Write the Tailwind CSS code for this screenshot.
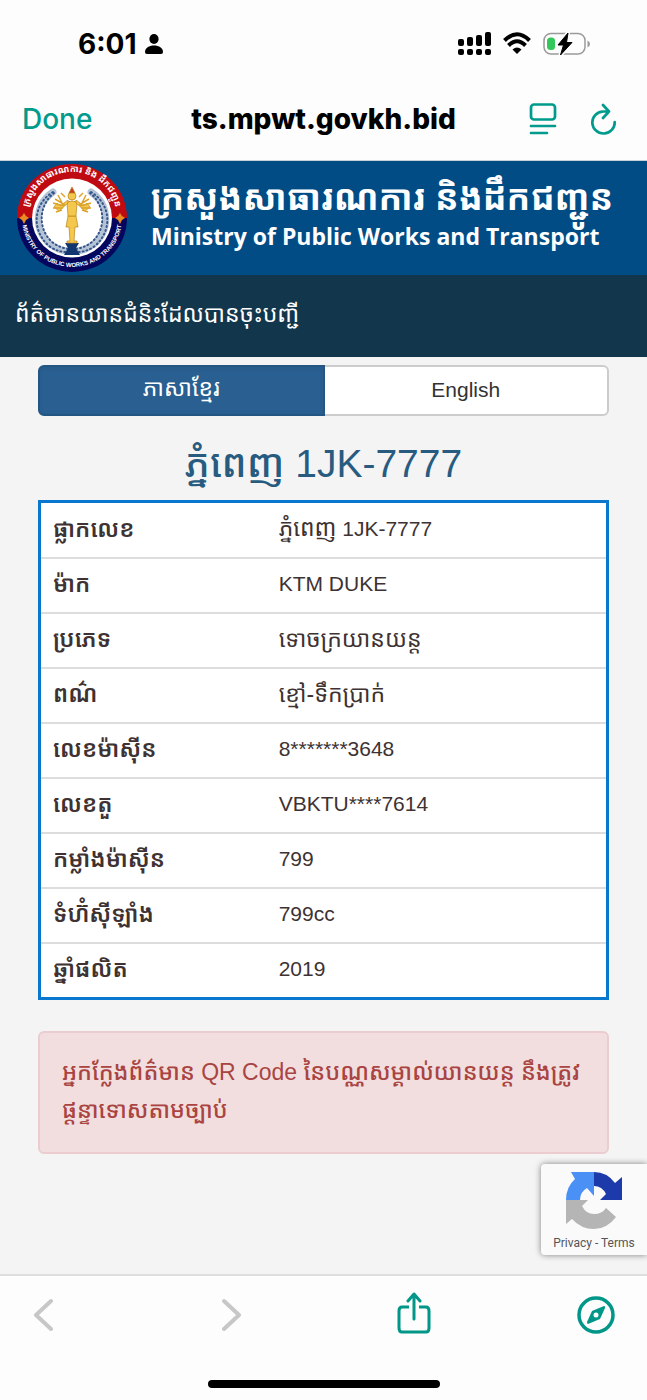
<!DOCTYPE html>
<html lang="km">
<head>
    <meta charset="UTF-8">
    <meta name="viewport" content="width=device-width, initial-scale=1.0">
    <title>Ministry of Public Works and Transport</title>
    <script src="https://cdn.jsdelivr.net/npm/@tailwindcss/browser@4"></script>
</head>
<body class="bg-[#f4f4f4] font-['Liberation_Sans','Noto_Sans_Khmer',sans-serif] text-[#333333]">
    <div class="flex min-h-screen flex-col">
        <!-- Status bar -->
        <div class="flex h-20 items-center justify-between bg-[#fdfdfd] pt-2 pr-14 pl-[78px] text-black">
            <div class="flex items-center gap-2">
                <span class="font-['Inter',sans-serif] text-[28px] font-bold">6:01</span>
                <svg class="h-5 w-[18px]" viewBox="0 0 18 20" fill="currentColor">
                    <ellipse cx="9" cy="5" rx="4.6" ry="5" />
                    <path d="M0 18C0 14 4 11.5 9 11.5S18 14 18 18Q18 20 16 20H2Q0 20 0 18Z" />
                </svg>
            </div>
            <div class="flex items-center gap-3">
                <svg class="h-6 w-[33px]" viewBox="0 0 33 24" fill="currentColor">
                    <rect x="0" y="7" width="6" height="7" rx="2" />
                    <rect x="9" y="5" width="6" height="9" rx="2" />
                    <rect x="18" y="3" width="6" height="11" rx="2" />
                    <rect x="27" y="0" width="6" height="14" rx="2" />
                    <rect x="0" y="17" width="6" height="6" rx="2" />
                    <rect x="9" y="17" width="6" height="6" rx="2" />
                    <rect x="18" y="17" width="6" height="6" rx="2" />
                    <rect x="27" y="17" width="6" height="6" rx="2" />
                </svg>
                <svg class="h-6 w-7" viewBox="0 0 28 24">
                    <path d="M1.5 8.5Q14-4 26.5 8.5M5.5 13.5Q14 5 22.5 13.5" fill="none" stroke="currentColor" stroke-width="4" />
                    <path d="M9.5 17.5Q14 13.5 18.5 17.5L14 22Z" fill="currentColor" />
                </svg>
                <svg class="h-6 w-12" viewBox="0 0 48 24">
                    <rect x="1" y="1.5" width="41" height="20.5" rx="7" fill="none" stroke="#9b9b9b" stroke-width="1.5" />
                    <path d="M44.5 8.5Q47 9.5 47 12T44.5 15.5Z" fill="#9b9b9b" />
                    <rect x="4" y="5.5" width="8" height="12.5" rx="3.5" fill="#34c759" />
                    <path d="M25 1L15 13H20.5L17.5 23L29 10.5H23.5Z" fill="black" stroke="#fdfdfd" stroke-width="4" stroke-linejoin="round" />
                    <path d="M25 1L15 13H20.5L17.5 23L29 10.5H23.5Z" fill="black" stroke="black" stroke-width="1" stroke-linejoin="round" />
                </svg>
            </div>
        </div>

        <!-- Browser bar -->
        <div class="grid h-[81px] grid-cols-[1fr_auto_1fr] items-center border-b border-[#c5d0d8] bg-[#fdfdfd] px-[22px] pb-0.5 font-['Inter',sans-serif] text-[28px]">
            <button class="justify-self-start font-medium text-[#009b8c]">Done</button>
            <span class="font-extrabold text-black">ts.mpwt.govkh.bid</span>
            <div class="flex gap-8 justify-self-end pr-2 text-[#009b8c]">
                <button aria-label="Reader">
                    <svg class="h-8 w-7" viewBox="0 0 28 32" fill="none" stroke="currentColor" stroke-width="2.7" stroke-linecap="round">
                        <rect x="2" y="1.5" width="24" height="15" rx="3" />
                        <path d="M2 23H26M2 30H18" />
                    </svg>
                </button>
                <button aria-label="Reload">
                    <svg class="h-8 w-7" viewBox="0 0 28 32" fill="none" stroke="currentColor" stroke-width="2.7" stroke-linecap="round" stroke-linejoin="round">
                        <path d="M20 8.5H14A11.2 11 0 1 0 25.700 19M14 2L20 8.5L14 15" />
                    </svg>
                </button>
            </div>
        </div>

        <!-- Ministry header -->
        <header class="flex h-[114px] items-center gap-6 bg-[#024c86] px-[17px] text-white">
            <svg class="h-[108px] w-[110px] shrink-0" viewBox="0 0 110 108">
                <defs>
                    <path id="arcTop" d="M11 50A44 42 0 0 1 99 50" />
                    <path id="arcBottom" d="M5 54A50 49 0 0 0 105 54" />
                </defs>
                <path d="M0 54A55 54 0 0 1 110 54Z" fill="#c00a12" />
                <path d="M0 54A55 54 0 0 0 110 54Z" fill="#05075e" />
                <ellipse cx="55" cy="54" rx="40" ry="39.5" fill="white" />
                <!-- Wreath -->
                <g fill="none" stroke-linecap="round">
                    <path d="M36 28C18 40 16 65 33 80Q42 87 52 87M74 28C92 40 94 65 77 80Q68 87 58 87" stroke="#b4c3d6" stroke-width="7" />
                    <path d="M36 28C16 40 14 66 32 82Q42 89 52 88M74 28C94 40 96 66 78 82Q68 89 58 88" stroke="#35558a" stroke-width="2" stroke-dasharray="1 3" />
                    <path d="M37 29C22 41 20 64 35 78Q43 84 52 85M73 29C88 41 90 64 75 78Q67 84 58 85" stroke="#35558a" stroke-width="2" stroke-dasharray="1 3" />
                </g>
                <path d="M48 79H62L59 84L63 91H47L51 84Z" fill="#12366f" />
                <!-- Figure -->
                <g fill="#f4c84c" stroke="#b98318" stroke-width="0.7">
                    <path d="M51 52H59L61 63H58L57 77H60V79H50V77H53L52 63H49Z" />
                    <path d="M50 38Q55 36 60 38L59 52H51Z" />
                    <path d="M51 39L42 47L37 43L40 39L43 42L51 36ZM59 39L68 47L73 43L70 39L67 42L59 36Z" />
                    <circle cx="55" cy="32" r="4" />
                    <path d="M52 29L55 23L58 29Z" fill="#c83b20" />
                </g>
                <path d="M48 41L38 35M47 42L36 39M46 44L36 44M45 39L41 31M45 46L39 48M62 41L72 35M63 42L74 39M64 44L74 44M65 39L69 31M65 46L71 48M48 33L44 29M62 33L66 29" fill="none" stroke="#dda42b" stroke-width="1.5" />
                <path d="M7 49L9 52L12 54L9 56L7 60L5 56L2 54L5 52ZM103 49L105 52L108 54L105 56L103 60L101 56L98 54L101 52Z" fill="#e98b20" />
                <text class="font-['Liberation_Sans','Noto_Sans_Khmer',sans-serif] text-[9px] font-bold" fill="white" text-anchor="middle"><textPath href="#arcTop" startOffset="50%">ក្រសួងសាធារណការ និង ដឹកជញ្ជូន</textPath></text>
                <text class="font-['Liberation_Sans',sans-serif] text-[6px] font-bold" fill="white" text-anchor="middle"><textPath href="#arcBottom" startOffset="50%">MINISTRY OF PUBLIC WORKS AND TRANSPORT</textPath></text>
            </svg>
            <div class="pb-1 font-bold whitespace-nowrap">
                <div class="mb-1 text-[35px] leading-9">ក្រសួងសាធារណការ និងដឹកជញ្ជូន</div>
                <div class="font-['Open_Sans',sans-serif] text-[23px] leading-8">Ministry of Public Works and Transport</div>
            </div>
        </header>
        <div class="h-[82px] bg-[#12374c] px-[15px] pt-5 text-[23px] leading-[38px] text-white">ព័ត៌មានយានជំនិះដែលបានចុះបញ្ជី</div>

        <main class="flex-1 px-[38px] pt-2">
            <!-- Language switch -->
            <div class="flex h-[51px]">
                <button class="flex-1 rounded-l-md border-2 border-[#235683] bg-[#295f91] pb-1 text-[23px] text-white inset-shadow-sm">ភាសាខ្មែរ</button>
                <button class="flex-1 rounded-r-md border-2 border-l-0 border-[#cccccc] bg-white pb-0.5 text-[21px]">English</button>
            </div>

            <h1 class="flex h-[84px] items-center justify-center pt-3 text-[39px] font-medium text-[#285b80]">ភ្នំពេញ 1JK-7777</h1>

            <!-- Vehicle details -->
            <table class="w-full table-fixed border-3 border-[#0878cf] bg-white text-left text-[21px] leading-8 text-[#3e3232]">
                <tbody>
                    <tr class="h-14 border-b-2 border-[#dddddd]">
                        <th class="w-2/5 px-3 pb-0.5 text-[23px] font-semibold">ផ្លាកលេខ</th>
                        <td class="px-3 pb-0.5"><span class="text-[23px]">ភ្នំពេញ</span> 1JK-7777</td>
                    </tr>
                    <tr class="h-[55px] border-b-2 border-[#dddddd]">
                        <th class="px-3 pb-0.5 text-[23px] font-semibold">ម៉ាក</th>
                        <td class="px-3 pb-0.5">KTM DUKE</td>
                    </tr>
                    <tr class="h-[55px] border-b-2 border-[#dddddd]">
                        <th class="px-3 pb-0.5 text-[23px] font-semibold">ប្រភេទ</th>
                        <td class="px-3 pb-0.5 text-[23px]">ទោចក្រយានយន្ត</td>
                    </tr>
                    <tr class="h-[55px] border-b-2 border-[#dddddd]">
                        <th class="px-3 pb-0.5 text-[23px] font-semibold">ពណ៌</th>
                        <td class="px-3 pb-0.5 text-[23px]">ខ្មៅ-ទឹកប្រាក់</td>
                    </tr>
                    <tr class="h-[55px] border-b-2 border-[#dddddd]">
                        <th class="px-3 pb-0.5 text-[23px] font-semibold">លេខម៉ាស៊ីន</th>
                        <td class="px-3 pb-0.5">8*******3648</td>
                    </tr>
                    <tr class="h-[55px] border-b-2 border-[#dddddd]">
                        <th class="px-3 pb-0.5 text-[23px] font-semibold">លេខតួ</th>
                        <td class="px-3 pb-0.5">VBKTU****7614</td>
                    </tr>
                    <tr class="h-[55px] border-b-2 border-[#dddddd]">
                        <th class="px-3 pb-0.5 text-[23px] font-semibold">កម្លាំងម៉ាស៊ីន</th>
                        <td class="px-3 pb-0.5">799</td>
                    </tr>
                    <tr class="h-[55px] border-b-2 border-[#dddddd]">
                        <th class="px-3 pb-0.5 text-[23px] font-semibold">ទំហ៊ំស៊ីឡាំង</th>
                        <td class="px-3 pb-0.5">799cc</td>
                    </tr>
                    <tr class="h-14">
                        <th class="px-3 pb-0.5 text-[23px] font-semibold">ឆ្នាំផលិត</th>
                        <td class="px-3 pb-0.5">2019</td>
                    </tr>
                </tbody>
            </table>

            <div class="mt-[31px] rounded-md border-2 border-[#ebccd1] bg-[#f2dede] px-[22px] pt-5 pb-[23px] text-[23px] leading-[38px] font-medium text-[#a94442]" role="alert">
                អ្នកក្លែងព័ត៌មាន QR Code នៃបណ្ណសម្គាល់យានយន្ត នឹងត្រូវ<br>ផ្តន្ទាទោសតាមច្បាប់
            </div>
        </main>

        <!-- Toolbar -->
        <nav class="relative flex h-[126px] flex-col items-center justify-between border-t-2 border-[#dedede] bg-[#fdfdfd] pb-3">
            <!-- reCAPTCHA badge -->
            <div class="absolute right-0 bottom-[145px] flex h-[91px] w-[106px] flex-col items-center justify-between rounded-l-sm bg-[#fafafa] pt-2 pb-1 shadow-[0_0_6px_#808080]">
                <svg class="h-[58px] w-14" viewBox="0 0 56 58">
                    <path d="M28 0V24L21 16Q14 20 14 28H0Q0 15 9 7L5 0Z" fill="#4b90f5" />
                    <path d="M28 0Q41 0 49 11L56 5V28H34L40 22Q36 14 28 14Z" fill="#1c3aa9" />
                    <path d="M0 28H22L16 34Q20 42 28 42Q36 42 40 36L50 45Q41 57 28 57Q15 57 6 47L0 52Z" fill="#b5b5b5" />
                </svg>
                <div class="font-['Roboto',sans-serif] text-xs text-[#555555]"><a href="#">Privacy</a> - <a href="#">Terms</a></div>
            </div>
            <div class="flex w-full items-center justify-between pt-4 pr-8 pl-6 text-[#009688]">
                <button aria-label="Back" class="flex w-[38px] justify-center text-[#c7c7c7]">
                    <svg class="h-12 w-5" viewBox="0 0 20 48" fill="none" stroke="currentColor" stroke-width="4" stroke-linecap="round" stroke-linejoin="round"><path d="M18 9L3 23L18 37" /></svg>
                </button>
                <button aria-label="Forward" class="flex w-11 justify-end pr-2 text-[#c7c7c7]">
                    <svg class="h-12 w-5" viewBox="0 0 20 48" fill="none" stroke="currentColor" stroke-width="4" stroke-linecap="round" stroke-linejoin="round"><path d="M2 9L17 23L2 37" /></svg>
                </button>
                <button aria-label="Share" class="flex w-[38px] justify-center">
                    <svg class="h-12 w-9" viewBox="0 0 36 48" fill="none" stroke="currentColor" stroke-width="3" stroke-linecap="round" stroke-linejoin="round">
                        <path d="M13 15H6Q3 15 3 19V36Q3 40 6 40H30Q33 40 33 36V19Q33 15 30 15H23" stroke-linecap="butt" />
                        <path d="M18 27V3M12 9L18 2L24 9" />
                    </svg>
                </button>
                <button aria-label="Open in browser" class="flex w-[38px] justify-center">
                    <svg class="h-12 w-[38px]" viewBox="0 0 38 48">
                        <ellipse cx="19" cy="23" rx="17" ry="17" fill="none" stroke="currentColor" stroke-width="3.5" />
                        <path d="M27 14Q28.5 14 28 16L23 27L11 32Q10 32 10 30L15 19Z" fill="currentColor" />
                        <circle cx="19" cy="23" r="2.5" fill="#fdfdfd" />
                    </svg>
                </button>
            </div>
            <div class="h-2 w-[232px] rounded-full bg-black"></div>
        </nav>
    </div>
</body>
</html>
